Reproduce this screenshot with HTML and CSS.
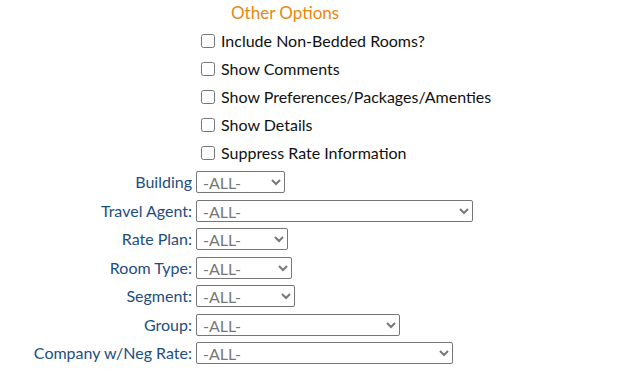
FILE: index.html
```html
<!DOCTYPE html>
<html lang="en">

<head>
  <meta charset="UTF-8">
  <title>Other Options</title>
  <link rel="stylesheet" href="styles.css">
</head>

<body>
  <div class="optionsWrap">
    <h3 class="optionsTitle">Other Options</h3>

    <ul class="checkList">
      <li><label><input type="checkbox"> Include Non-Bedded Rooms?</label></li>
      <li><label><input type="checkbox"> Show Comments</label></li>
      <li><label><input type="checkbox"> Show Preferences/Packages/Amenties</label></li>
      <li><label><input type="checkbox"> Show Details</label></li>
      <li><label><input type="checkbox"> Suppress Rate Information</label></li>
    </ul>

    <div class="filterList">
      <div class="filterRow">
        <label class="filterLabel">Building</label>
        <select class="pick wBuilding"><option>-ALL-</option></select>
      </div>
      <div class="filterRow">
        <label class="filterLabel">Travel Agent:</label>
        <select class="pick wAgent"><option>-ALL-</option></select>
      </div>
      <div class="filterRow">
        <label class="filterLabel">Rate Plan:</label>
        <select class="pick wRate"><option>-ALL-</option></select>
      </div>
      <div class="filterRow">
        <label class="filterLabel">Room Type:</label>
        <select class="pick wRoom"><option>-ALL-</option></select>
      </div>
      <div class="filterRow">
        <label class="filterLabel">Segment:</label>
        <select class="pick wSegment"><option>-ALL-</option></select>
      </div>
      <div class="filterRow">
        <label class="filterLabel">Group:</label>
        <select class="pick wGroup"><option>-ALL-</option></select>
      </div>
      <div class="filterRow">
        <label class="filterLabel">Company w/Neg Rate:</label>
        <select class="pick wCompany"><option>-ALL-</option></select>
      </div>
    </div>
  </div>
</body>

</html>
```

FILE: styles.css
```css
body {
  margin: 0;
  background-color: #fff;
  font-family: Lato, "Open Sans", sans-serif;
  font-size: 16px;
  color: #111;
}

.optionsWrap {
  padding-top: 3px;
}

.optionsTitle {
  margin: 0 0 8px 231px;
  font-size: 17px;
  font-weight: normal;
  color: #e8870e;
  line-height: 20px;
}

.checkList {
  list-style: none;
  margin: 0;
  padding: 0 0 0 201px;
}

.checkList li {
  height: 28px;
}

.checkList label {
  display: flex;
  align-items: center;
  gap: 6px;
  line-height: 19px;
}

.checkList input {
  margin: 0;
  width: 14px;
  height: 14px;
}

.filterList {
  display: flex;
  flex-direction: column;
  gap: 6.5px;
}

.filterRow {
  display: flex;
  align-items: center;
  gap: 4px;
}

.filterLabel {
  width: 192px;
  text-align: right;
  color: #1d4e7e;
  line-height: 20px;
}

.pick {
  height: 22px;
  margin: 0;
  padding: 0 2px;
  font-family: Lato, sans-serif;
  font-size: 16px;
  color: #777;
  border: 1px solid #767676;
  border-radius: 2px;
  background-color: #fff;
}

.wBuilding { width: 89px; }
.wAgent { width: 277px; }
.wRate { width: 92px; }
.wRoom { width: 96px; }
.wSegment { width: 99px; }
.wGroup { width: 204px; }
.wCompany { width: 257px; }
```
